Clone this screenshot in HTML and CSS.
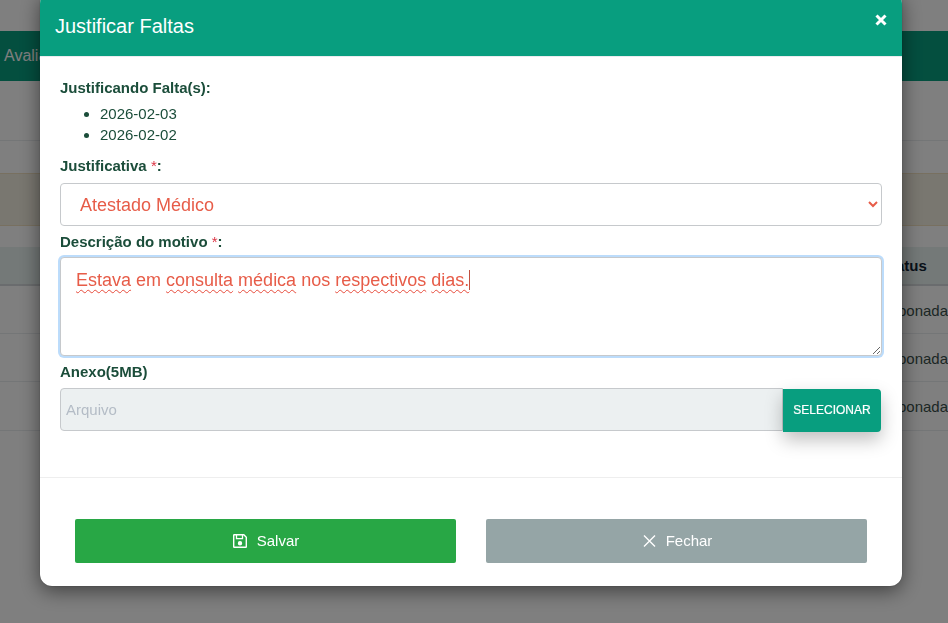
FILE: index.html
```html
<!DOCTYPE html>
<html lang="pt-BR">
<head>
<meta charset="utf-8">
<title>Justificar Faltas</title>
<link rel="stylesheet" href="styles.css">
</head>
<body>
<div class="page">
  <div class="topbar"></div>
  <nav class="nav">Avaliações</nav>
  <div class="row row-a"></div>
  <div class="row row-b"></div>
  <div class="alert"></div>
  <div class="thead"><span>Status</span></div>
  <div class="trow"><span>Abonada</span></div>
  <div class="trow"><span>Abonada</span></div>
  <div class="trow"><span>Abonada</span></div>
</div>
<div class="overlay"></div>
<div class="modal">
  <header class="modal-head">
    <h1>Justificar Faltas</h1>
    <svg class="close" width="12" height="12" viewBox="0 0 12 12"><path d="M1.500 1.500l9 9M10.500 1.500l-9 9" stroke="#fff" stroke-width="3"/></svg>
  </header>
  <div class="modal-body">
    <p class="label">Justificando Falta(s):</p>
    <ul class="dates">
      <li>2026-02-03</li>
      <li>2026-02-02</li>
    </ul>
    <p class="label label-just">Justificativa <i>*</i>:</p>
    <select class="select"><option>Atestado Médico</option></select>
    <p class="label label-desc">Descrição do motivo <i>*</i>:</p>
    <div class="textarea"><span class="typo">Estava</span> em <span class="typo">consulta</span> <span class="typo">médica</span> nos <span class="typo">respectivos</span> <span class="typo">dias.</span><span class="caret"></span></div>
    <p class="label label-file">Anexo(5MB)</p>
    <div class="file">
      <div class="file-input">Arquivo</div>
      <div class="file-btn">SELECIONAR</div>
    </div>
  </div>
  <footer class="modal-foot">
    <button class="btn btn-save">
      <svg width="16" height="16" viewBox="0 0 16 16" fill="none" stroke="#fff" stroke-width="1.400"><path d="M1.700 2.200a.5.5 0 0 1 .5-.5h9.600l2.500 2.500v9.600a.5.5 0 0 1-.5.5H2.200a.5.5 0 0 1-.5-.5z"/><path d="M4.500 2v3.600h6V2" stroke-width="1.300"/><circle cx="8" cy="10.200" r="1.500" fill="#fff"/></svg>
      <span class="btn-text">Salvar</span>
    </button>
    <button class="btn btn-close">
      <svg width="16" height="16" viewBox="0 0 16 16" fill="none" stroke="#fff" stroke-width="1.400"><path d="M3 2.500l11 11M14 2.500l-11 11"/></svg>
      <span class="btn-text">Fechar</span>
    </button>
  </footer>
</div>
</body>
</html>
```

FILE: styles.css
```css
* { box-sizing: border-box; }
html, body { margin: 0; height: 100%; overflow: hidden; }
body {
  font-family: "Liberation Sans", Arial, sans-serif;
  font-size: 16px;
  color: #1b4d3a;
  background: #fff;
}
.page { height: 623px; background: #fff; }
.topbar { height: 31px; }
.nav {
  height: 50px;
  background: #089e7f;
  color: #fff;
  font-size: 16px;
  line-height: 50px;
  padding-left: 4px;
  white-space: nowrap;
}
.row { border-bottom: 1px solid #e9ecef; }
.row-a { height: 60px; }
.row-b { height: 33px; border-bottom-color: #f0e0c0; }
.alert { height: 52px; background: #f3eee0; border-bottom: 1px solid #f0e0c0; }
.thead {
  margin-top: 21px;
  height: 39px;
  background: #e8f2f0;
  border-bottom: 2px solid #d5d9dc;
  font-weight: bold;
  font-size: 15px;
  line-height: 38px;
  color: #123;
  display: flex;
  justify-content: flex-end;
}
.thead span { width: 67px; flex: none; }
.trow {
  height: 48.200px;
  border-bottom: 1px solid #e9ecef;
  font-size: 15px;
  line-height: 49px;
  color: #3a4f4a;
  display: flex;
  justify-content: flex-end;
  overflow: hidden;
}
.trow span { width: 60px; flex: none; white-space: nowrap; }
.overlay { position: fixed; inset: 0; background: rgba(0, 0, 0, .5); }
.modal {
  position: fixed;
  left: 40px;
  top: -8px;
  width: 862px;
  height: 594px;
  background: #fff;
  border-radius: 12px;
  box-shadow: 0 5px 20px rgba(0, 0, 0, .5), 0 0 1px rgba(0, 0, 0, .6);
  display: flex;
  flex-direction: column;
  overflow: hidden;
}
.modal-head {
  flex: none;
  height: 65px;
  background: #089e7f;
  border-bottom: 1px solid #e9ecef;
  position: relative;
  padding: 22px 15px 0;
}
.modal-head h1 {
  margin: 0;
  font-size: 20px;
  line-height: 24px;
  font-weight: 400;
  color: #fff;
}
.close { position: absolute; left: 835px; top: 22px; }
.modal-body {
  flex: none;
  height: 421px;
  padding: 23px 20px 0;
  border-bottom: 1px solid #eee;
}
.label {
  margin: 0;
  font-size: 15px;
  line-height: 16px;
  font-weight: bold;
  color: #1b4d3a;
}
.label i { font-style: normal; font-weight: normal; color: #dc3545; }
.dates {
  margin: 7px 0 0;
  padding: 0 0 0 40px;
  font-size: 15px;
  line-height: 21px;
}
.label-just { margin-top: 13px; }
.select {
  display: block;
  width: 822px;
  height: 43px;
  margin-top: 9px;
  padding: 0 15px;
  border: 1px solid #c6c9cc;
  border-radius: 4px;
  background: #fff;
  color: #e75c48;
  font-family: inherit;
  font-size: 18px;
  outline: none;
}
.label-desc { margin-top: 8px; }
.textarea {
  width: 822px;
  height: 99px;
  margin-top: 7px;
  padding: 10px 15px;
  border: 1px solid #c6c9cc;
  border-radius: 4px;
  box-shadow: 0 0 0 2px #bcdcfb;
  color: #e75c48;
  font-size: 18px;
  line-height: 24px;
  overflow: auto;
  resize: vertical;
  background: #fff;
}
.typo {
  text-decoration: underline wavy #e74c3c 1px;
  text-decoration-skip-ink: none;
  text-underline-offset: 3px;
}
.caret { display: inline-block; width: 1px; height: 20px; background: #c0503f; vertical-align: -4px; }
.label-file { margin-top: 8px; }
.file { display: flex; width: 821px; height: 43px; margin-top: 8px; }
.file-input {
  flex: 1;
  background: #ecf0f1;
  border: 1px solid #c6c9cc;
  border-radius: 4px 0 0 4px;
  color: #b4bcc6;
  font-size: 15px;
  line-height: 41px;
  padding-left: 5px;
}
.file-btn {
  flex: none;
  width: 98px;
  height: 43px;
  margin-top: 1px;
  background: #089e7f;
  border-radius: 0 4px 4px 0;
  color: #fff;
  font-size: 12px;
  -webkit-text-stroke: .2px #fff;
  line-height: 42px;
  text-align: center;
  box-shadow: 0 8px 18px rgba(0, 0, 0, .25);
}
.modal-foot {
  flex: 1;
  display: flex;
  justify-content: space-between;
  padding: 41px 35px 0;
}
.btn {
  width: 381px;
  height: 44px;
  border: none;
  border-radius: 2px;
  color: #fff;
  font-family: inherit;
  font-size: 15px;
  display: flex;
  align-items: center;
  justify-content: center;
  gap: 9px;
}
.btn-text { margin-bottom: 2px; }
.btn-save { background: #28a745; }
.btn-close { background: #95a5a6; }
```
